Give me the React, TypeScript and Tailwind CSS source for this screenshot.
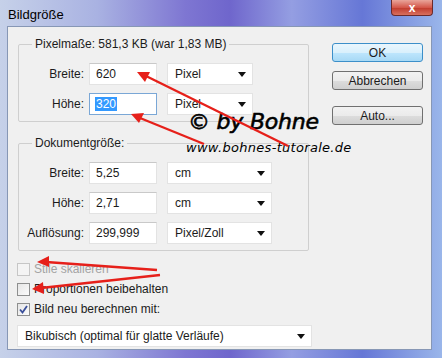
import React from 'react';

const ui = { fontFamily: '"Liberation Sans", Arial, sans-serif' };

const SelectBox = ({ value, className = '' }: { value: string; className?: string }) => (
  <div
    className={`h-[22px] flex items-center justify-between bg-white border border-[#e3e3e3] pl-[7px] pr-[6px] text-[12px] text-[#1b1b1b] ${className}`}
  >
    <span>{value}</span>
    <svg width="8" height="5" viewBox="0 0 8 5">
      <path d="M0 0 H8 L4 5 Z" fill="#111" />
    </svg>
  </div>
);

const TextBox = ({ value, focused, selected }: { value: string; focused?: boolean; selected?: boolean }) => (
  <div
    className={`w-[68px] h-[22px] flex items-center bg-white pl-[5px] text-[12px] text-[#1b1b1b] border ${
      focused ? 'border-[#7aa7d6]' : 'border-[#e3e3e3] border-t-[#c9c9c9]'
    }`}
  >
    {selected ? <span className="bg-[#3399ff] text-white px-[1px] leading-[14px]">{value}</span> : <span className="pl-[1px]">{value}</span>}
  </div>
);

const Row = ({ label, children }: { label: string; children: React.ReactNode }) => (
  <div className="flex items-center">
    <span className="w-[65px] text-right text-[12px] text-[#1b1b1b]">{label}</span>
    <div className="ml-[5px] flex items-center gap-[10px]">{children}</div>
  </div>
);

const Check = ({ label, checked, disabled }: { label: string; checked?: boolean; disabled?: boolean }) => (
  <div className="flex items-center h-[20px]">
    <div
      className={`w-[13px] h-[13px] border flex items-center justify-center ${
        disabled ? 'border-[#c6c6c6] bg-[#f4f4f4]' : 'border-[#8e8f8f] bg-[linear-gradient(135deg,#e6e6e6,#fbfbfb)]'
      }`}
    >
      {checked && (
        <svg width="9" height="9" viewBox="0 0 9 9">
          <path d="M1 4.5 L3.5 7.5 L8 1" stroke="#3a4f9a" strokeWidth="1.8" fill="none" />
        </svg>
      )}
    </div>
    <span className={`ml-[4px] text-[12px] ${disabled ? 'text-[#a3a3a3]' : 'text-[#1b1b1b]'}`}>{label}</span>
  </div>
);

const Button = ({ label, primary }: { label: string; primary?: boolean }) => (
  <div
    className={`w-[91px] h-[19px] rounded-[3px] border flex items-center justify-center text-[12px] text-[#1b1b1b] ${
      primary
        ? 'border-[#3c8fc9] bg-[linear-gradient(#eaf6fd,#d9f0fc_50%,#bee6fd_51%,#a7d9f5)]'
        : 'border-[#707070] bg-[linear-gradient(#f2f2f2,#ebebeb_50%,#dddddd_51%,#cfcfcf)]'
    }`}
  >
    {label}
  </div>
);

export default function App() {
  return (
    <div
      style={ui}
      className="relative w-[442px] h-[358px] overflow-hidden bg-[linear-gradient(90deg,#c6d1e9_0%,#a9b2e2_22%,#7e76d2_42%,#6f66cc_52%,#949ee2_66%,#6677d6_82%,#9ab6ea_100%)]"
    >
      {/* title bar */}
      <div className="h-[26px] flex justify-between">
        <span className="pl-[8px] pt-[5px] text-[13px] text-black">Bildgröße</span>
        <div className="mr-[9px] w-[42px] h-[16px] rounded-b-[4px] border border-t-0 border-[#6b2a2a] bg-[linear-gradient(#e9a59a,#d4574a_50%,#c0392b_51%,#d8705e)] flex items-center justify-center">
          <span className="text-white text-[12px] font-bold leading-none">x</span>
        </div>
      </div>

      {/* client area */}
      <div className="ml-[7px] w-[425px] h-[324px] bg-[#f0f0f0] border border-[#8797b5] flex">
        <div className="pl-[9px] pt-[10px] flex flex-col">
          <fieldset className="ml-[1px] w-[291px] h-[85px] border border-[#cfcfcf] rounded-[2px] px-0">
            <legend className="ml-[13px] px-[3px] text-[12px] leading-[14px] text-[#1b1b1b]">
              Pixelmaße: 581,3 KB (war 1,83 MB)
            </legend>
            <div className="pt-[12px] flex flex-col gap-[8px]">
              <Row label="Breite:">
                <TextBox value="620" />
                <SelectBox value="Pixel" className="w-[86px]" />
              </Row>
              <Row label="Höhe:">
                <TextBox value="320" focused selected />
                <SelectBox value="Pixel" className="w-[86px]" />
              </Row>
            </div>
          </fieldset>

          <fieldset className="ml-[1px] mt-[14px] w-[291px] h-[115px] border border-[#cfcfcf] rounded-[2px] px-0">
            <legend className="ml-[13px] px-[3px] text-[12px] leading-[14px] text-[#1b1b1b]">Dokumentgröße:</legend>
            <div className="pt-[12px] flex flex-col gap-[8px]">
              <Row label="Breite:">
                <TextBox value="5,25" />
                <SelectBox value="cm" className="w-[105px]" />
              </Row>
              <Row label="Höhe:">
                <TextBox value="2,71" />
                <SelectBox value="cm" className="w-[105px]" />
              </Row>
              <Row label="Auflösung:">
                <TextBox value="299,999" />
                <SelectBox value="Pixel/Zoll" className="w-[105px]" />
              </Row>
            </div>
          </fieldset>

          <div className="mt-[8px] flex flex-col">
            <Check label="Stile skalieren" disabled />
            <Check label="Proportionen beibehalten" />
            <Check label="Bild neu berechnen mit:" checked />
          </div>

          <SelectBox value="Bikubisch (optimal für glatte Verläufe)" className="mt-[6px] w-[295px] h-[21px]" />
        </div>

        <div className="ml-[20px] pt-[16px] flex flex-col">
          <Button label="OK" primary />
          <div className="mt-[9px]">
            <Button label="Abbrechen" />
          </div>
          <div className="mt-[16px]">
            <Button label="Auto..." />
          </div>
        </div>
      </div>

      {/* watermark */}
      <div
        className="absolute left-[188px] top-[111px] italic text-[22px] tracking-[-0.2px] text-black leading-none [-webkit-text-stroke:0.6px_black]"
        style={{ fontFamily: '"DejaVu Sans", sans-serif' }}
      >
        © by Bohne
      </div>
      <div
        className="absolute left-[186px] top-[141px] italic text-[13px] tracking-[0.3px] text-black leading-none"
        style={{ fontFamily: '"DejaVu Sans", sans-serif' }}
      >
        www.bohnes-tutorale.de
      </div>

      {/* red arrows */}
      <svg className="absolute left-0 top-0" width="442" height="358" viewBox="0 0 442 358">
        <g stroke="#e6201a" strokeWidth="2.4" fill="none">
          <line x1="288" y1="146" x2="146" y2="76" />
          <line x1="204" y1="144" x2="140" y2="118" />
          <line x1="157" y1="270" x2="46" y2="262" />
          <line x1="160" y1="275" x2="41" y2="288" />
        </g>
        <g fill="#e6201a">
          <path d="M137 72 L150 72 L145 82 Z" />
          <path d="M131 114 L144 113 L139 123 Z" />
          <path d="M37 262 L49 256 L49 267 Z" />
          <path d="M32 289 L43 282 L44 294 Z" />
        </g>
      </svg>
    </div>
  );
}
